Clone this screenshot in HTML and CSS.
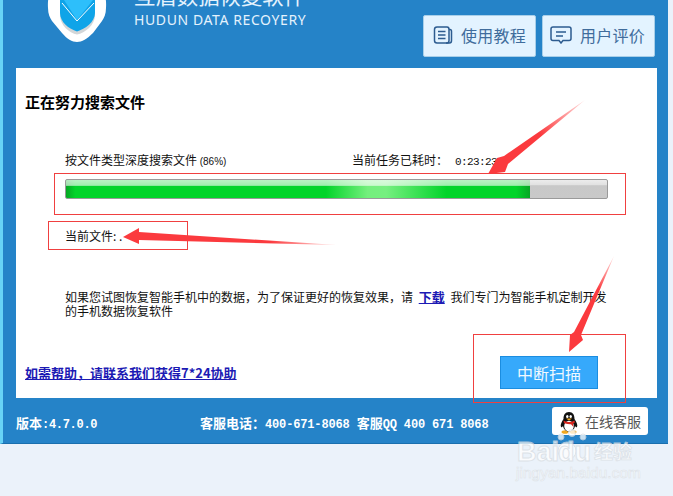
FILE: index.html
```html
<!DOCTYPE html>
<html lang="zh">
<head>
<meta charset="utf-8">
<title>互盾数据恢复软件</title>
<link rel="stylesheet" href="styles.css">
</head>
<body>
<div class="window">
  <header class="header">
    <svg class="logo" viewBox="0 0 60 43" width="60" height="43">
      <path class="logo-blob" d="M8 -12H52Q60 -8 59 8C59 14 57 18 55 21L46 33C40 39 35 42 30 42C25 42 20 39 15 33L5 21C3 18 1 14 1 8Q0 -8 8 -12Z"/>
      <path class="logo-shadow" d="M13 0H48V15C48 25 38 33 30 34.500C22 33 13 25 13 15Z"/>
      <path class="logo-blue" d="M13 0H48V13C48 22 38 29 30 31.500C22 29 13 22 13 13Z"/>
      <path class="logo-light" d="M17 0H46L30 20Z"/>
      <path class="logo-v" d="M15 3L30 21L47 3"/>
    </svg>
    <div class="brand">
      <div class="brand-cn">互盾数据恢复软件</div>
      <div class="brand-en">HUDUN DATA RECOYERY</div>
    </div>
    <div class="tools">
      <a class="tool">
        <svg class="tool-icon" viewBox="0 0 20 18" width="20" height="18">
          <path d="M14 1H4Q1.500 1 1.500 3.500V14.500Q1.500 17 4 17H14Q16 17 16 14.500V3.500Q16 1 14 1Z"/>
          <path d="M16 3.500H17Q18.500 3.500 18.500 5.500V14.500Q18.500 17 16.500 17H13"/>
          <path d="M5 5.500H12.500M5 9H12.500M5 12.500H12.500"/>
        </svg>
        使用教程
      </a>
      <a class="tool">
        <svg class="tool-icon tool-icon-wide" viewBox="0 0 22 18" width="22" height="18">
          <path d="M3 1H19Q21 1 21 3V12.500Q21 14.500 19 14.500H13L11 17L9 14.500H3Q1 14.500 1 12.500V3Q1 1 3 1Z"/>
          <path d="M6 6H16M6 10H13"/>
        </svg>
        用户评价
      </a>
    </div>
  </header>

  <main class="panel">
    <h1 class="title">正在努力搜索文件</h1>
    <div class="status">
      <span class="status-task">按文件类型深度搜索文件 <small class="pct">(86%)</small></span>
      <span class="status-time">当前任务已耗时&#xFF1A;<span class="clock">0:23:23</span></span>
    </div>
    <div class="progress"><div class="progress-fill" style="width:85.8%"></div></div>
    <div class="current">当前文件: .</div>
    <p class="notice">如果您试图恢复智能手机中的数据&#xFF0C;为了保证更好的恢复效果&#xFF0C;请 <a class="link link-inline">下载</a> 我们专门为智能手机定制开发<br>的手机数据恢复软件</p>
    <div class="actions">
      <a class="link help">如需帮助&#xFF0C;请联系我们获得7*24协助</a>
      <button class="stop">中断扫描</button>
    </div>
  </main>

  <footer class="footer">
    <span class="version"><span class="cjk">版本</span>:4.7.0.0</span>
    <span class="service"><span class="cjk">客服电话&#xFF1A;</span>400-671-8068 <span class="cjk">客服</span>QQ 400 671 8068</span>
    <a class="online">
      <svg class="penguin" viewBox="0 0 18 22" width="18" height="22">
        <ellipse class="pg-foot" cx="5" cy="20" rx="3.500" ry="1.800"/>
        <ellipse class="pg-foot" cx="13" cy="20" rx="3.500" ry="1.800"/>
        <path class="pg-black" d="M9 0C13 0 14.500 3 14.500 7C16.500 10 18 13 17 15C16 15.500 15.500 15 15 14C14.500 17 12 19.500 9 19.500C6 19.500 3.500 17 3 14C2.500 15 2 15.500 1 15C0 13 1.500 10 3.500 7C3.500 3 5 0 9 0Z"/>
        <ellipse class="pg-white" cx="9" cy="14" rx="4.800" ry="5.300"/>
        <ellipse class="pg-white" cx="7.300" cy="4.500" rx="1.200" ry="1.600"/>
        <ellipse class="pg-white" cx="10.700" cy="4.500" rx="1.200" ry="1.600"/>
        <path class="pg-beak" d="M6 6.500H12L9 8.500Z"/>
        <path class="pg-red" d="M3.500 8.500Q9 11.500 14.500 8.500L14.800 10.500Q13 11.500 13 12L13.500 15L11 12.300Q9 12.600 4 11.300Z"/>
      </svg>
      在线客服
    </a>
  </footer>
</div>

<svg class="annotations" viewBox="0 0 673 496" width="673" height="496" aria-hidden="true">
  <defs>
    <linearGradient id="fade1" gradientUnits="userSpaceOnUse" x1="585" y1="100" x2="540" y2="134">
      <stop offset="0" stop-color="#ff3c3c" stop-opacity="0.15"/><stop offset="1" stop-color="#fb3a3e"/>
    </linearGradient>
    <linearGradient id="fade2" gradientUnits="userSpaceOnUse" x1="337" y1="245" x2="270" y2="241">
      <stop offset="0" stop-color="#ff3c3c" stop-opacity="0.1"/><stop offset="1" stop-color="#fb3a3e"/>
    </linearGradient>
    <linearGradient id="fade3" gradientUnits="userSpaceOnUse" x1="614" y1="256" x2="598" y2="290">
      <stop offset="0" stop-color="#ff3c3c" stop-opacity="0.15"/><stop offset="1" stop-color="#fb3a3e"/>
    </linearGradient>
  </defs>
  <rect class="mark" x="54.500" y="173.500" width="571" height="41"/>
  <rect class="mark" x="48.500" y="221.500" width="139" height="28"/>
  <rect class="mark" x="473.500" y="334.500" width="152" height="68"/>
  <polygon fill="url(#fade1)" points="585,100 508,164 505,172 488,174 497,158 504,156"/>
  <polygon fill="url(#fade2)" points="337,245 139,240 139,244 123,237 139,228 139,232"/>
  <polygon fill="url(#fade3)" points="614,256 581,335 583,340 569,352 570,335 574,332"/>
  <g class="wm">
    <text class="wm-logo" x="517" y="461">Bai</text>
    <circle class="wm-paw" cx="567" cy="451" r="9"/>
    <circle class="wm-paw" cx="561" cy="437" r="3"/>
    <circle class="wm-paw" cx="572" cy="433" r="3.500"/>
    <circle class="wm-paw" cx="583" cy="437" r="3"/>
    <text class="wm-logo" x="558" y="461">du</text>
    <text class="wm-cn" x="594" y="459">经验</text>
    <text class="wm-url" x="516" y="478">jingyan.baidu.com</text>
  </g>
</svg>
</body>
</html>
```
FILE: styles.css
```css
* { box-sizing: border-box; }
html, body { margin: 0; padding: 0; }
body {
  width: 673px;
  height: 496px;
  overflow: hidden;
  position: relative;
  background: #ebf2fa;
  font-family: "Noto Sans CJK SC", "Liberation Sans", sans-serif;
  font-size: 12px;
  color: #111;
}
.window {
  width: 668px;
  height: 444px;
  display: flex;
  flex-direction: column;
  background: #2583c8;
  border-left: 3px solid #68d3f6;
  border-bottom: 1px solid #1a6fae;
}
.header {
  height: 68px;
  display: flex;
  padding-left: 44px;
  overflow: hidden;
}
.logo { flex: none; }
.logo-blob { fill: #fff; }
.logo-shadow { fill: #d3d6d8; }
.logo-blue { fill: #0fa4e8; }
.logo-light { fill: #2dbffb; }
.logo-v { fill: none; stroke: #fff; stroke-width: 1; }
.brand { margin-left: 27px; color: #e4f2fd; }
.brand-cn {
  height: 22px;
  margin-top: -16px;
  font-size: 21.400px;
  line-height: 22px;
  white-space: nowrap;
}
.brand-en {
  margin-top: 6px;
  font-family: "Noto Sans", sans-serif;
  font-size: 14px;
  line-height: 16px;
  letter-spacing: 0.600px;
  white-space: nowrap;
}
.tools {
  margin-left: auto;
  margin-right: 13px;
  padding-top: 15px;
  display: flex;
  gap: 6px;
}
.tool {
  width: 113px;
  height: 42px;
  padding-bottom: 2px;
  display: flex;
  align-items: center;
  justify-content: center;
  gap: 8px;
  background: #e3f3ff;
  border: 1px solid #a8cfe9;
  border-radius: 2px;
  color: #3f6c9c;
  font-size: 16px;
  letter-spacing: 0.300px;
}
.tool-icon { flex: none; fill: none; stroke: #2d5c90; stroke-width: 1.500; }
.tool-icon-wide { margin-left: -2px; }
.panel {
  width: 641px;
  height: 330px;
  margin-left: 13px;
  padding: 24px 0 0;
  background: #fff;
  display: flex;
  flex-direction: column;
}
.title {
  margin: 0 0 0 9px;
  font-size: 15px;
  line-height: 20px;
  font-weight: 700;
  color: #000;
}
.status {
  margin: 39px 0 0 49px;
  height: 18px;
  line-height: 18px;
  display: flex;
}
.status-task { width: 287px; white-space: nowrap; }
.pct { font-size: 10px; font-family: "Liberation Sans", sans-serif; }
.status-time { white-space: nowrap; }
.clock {
  font-family: "Liberation Mono", monospace;
  font-size: 11px;
  letter-spacing: -0.600px;
  margin-left: 7px;
}
.progress {
  width: 543px;
  height: 20px;
  margin: 10px 0 0 49px;
  background: linear-gradient(#ececec 0, #e2e2e2 25%, #c8c8c8 32%, #c9c9c9 100%);
  border: 1px solid #9a9a9a;
  border-radius: 2px;
  overflow: hidden;
}
.progress-fill {
  height: 100%;
  background:
    linear-gradient(rgba(255,255,255,.72) 0, rgba(255,255,255,.62) 30%, rgba(255,255,255,0) 34%),
    linear-gradient(90deg, #07a624 0, #02d42a 2%, #02d42a 56%, #74ef7d 65%, #76ef80 69%, #02d42a 82%, #02d42a 97%, #07a624 100%);
}
.current { margin: 28px 0 0 49px; line-height: 18px; }
.notice { margin: 45px 0 0 49px; line-height: 14px; white-space: nowrap; }
.link { color: #1c1ab4; font-size: 13px; font-weight: 700; text-decoration: underline; }
.link-inline { margin: 0 3px; }
.actions {
  margin: 38px 59px 0 9px;
  display: flex;
  align-items: center;
  justify-content: space-between;
}
.stop {
  width: 98px;
  height: 33px;
  padding: 0;
  background: #36a9fb;
  border: 1px solid #1b8de0;
  color: #f1f9ff;
  font: 16px "Noto Sans CJK SC", sans-serif;
}
.footer {
  flex: 1;
  display: flex;
  align-items: center;
  padding: 0 20px 0 13px;
  color: #fff;
  font-family: "Liberation Mono", "Noto Sans CJK SC", monospace;
  font-weight: 700;
  letter-spacing: -0.300px;
}
.cjk { font-family: "Noto Sans CJK SC", sans-serif; font-size: 13px; letter-spacing: 0; }
.version { width: 184px; padding-top: 3px; }
.service { padding-top: 3px; white-space: nowrap; letter-spacing: -0.150px; }
.online {
  margin-left: auto;
  width: 96px;
  height: 28px;
  display: flex;
  align-items: center;
  gap: 7px;
  padding-left: 8px;
  background: #fff;
  border-radius: 3px;
  color: #555;
  font: 14px "Noto Sans CJK SC", sans-serif;
  letter-spacing: 0;
}
.penguin { flex: none; margin-top: 4px; }
.pg-black { fill: #111; }
.pg-white { fill: #fff; }
.pg-foot, .pg-beak { fill: #f3a91f; }
.pg-red { fill: #d8261f; }
.annotations { position: absolute; left: 0; top: 0; pointer-events: none; }
.mark { fill: none; stroke: #f04040; stroke-width: 1; }
.wm { opacity: .75; }
.wm-logo { font: 700 27px "Liberation Sans", sans-serif; fill: #fff; stroke: #d8dde2; stroke-width: 1; }
.wm-paw { fill: #fff; stroke: #d8dde2; stroke-width: 1; }
.wm-cn { font: 700 19px "Noto Sans CJK SC", sans-serif; fill: #fff; stroke: #d8dde2; stroke-width: .8; }
.wm-url { font: 15.500px "Liberation Sans", sans-serif; fill: #fff; stroke: #d8dde2; stroke-width: .6; }
```
